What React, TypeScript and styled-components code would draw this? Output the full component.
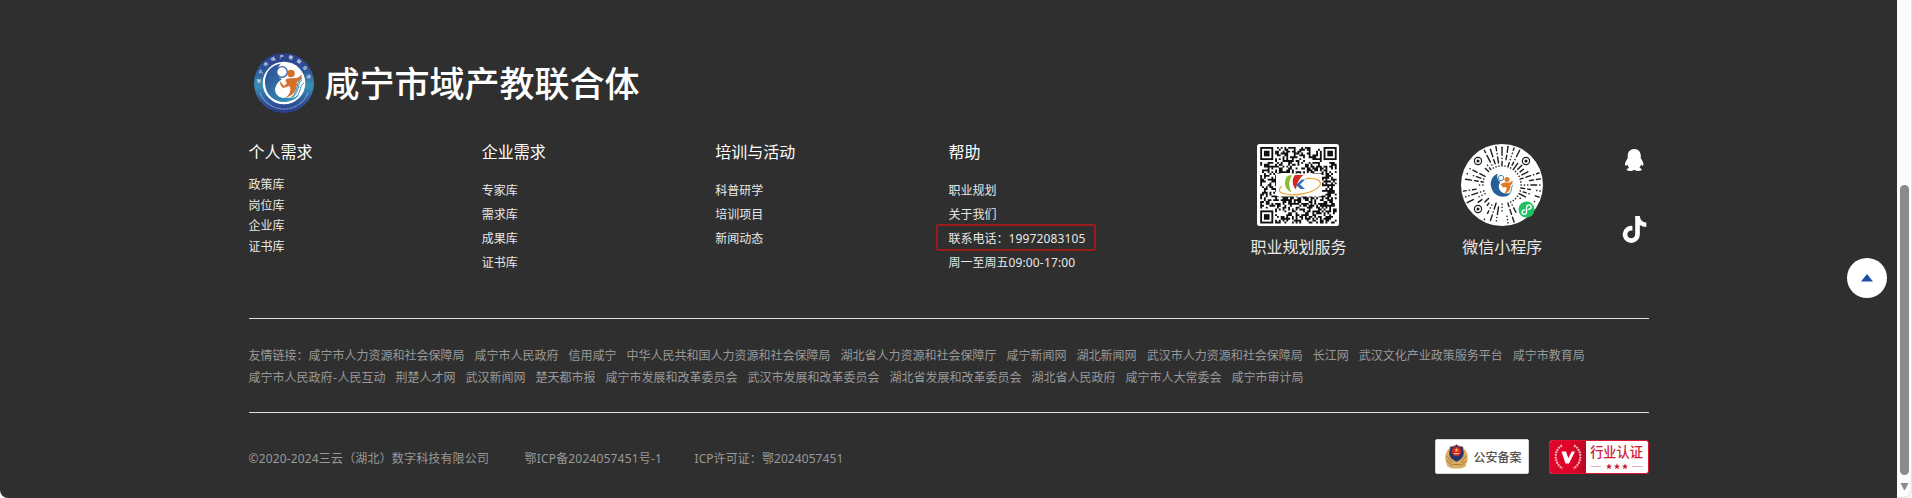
import React from 'react';
import styled, { createGlobalStyle } from 'styled-components';
import { FaTiktok } from 'react-icons/fa';

const GlobalStyle = createGlobalStyle`
  *, *::before, *::after { box-sizing: border-box; }
  body {
    margin: 0;
    background: #fafafa;
    font-family: 'Noto Sans', 'Noto Sans CJK SC', sans-serif;
    overflow: hidden;
  }
  ul { list-style: none; margin: 0; padding: 0; }
`;

const Page = styled.div`
  display: flex;
  width: 1912px;
  height: 498px;
  background: #fafafa;
`;

const Footer = styled.footer`
  position: relative;
  flex: 1;
  padding: 53px 248.5px 0;
  background: #2f2f2f;
  border-bottom-left-radius: 8px;
`;

const Brand = styled.div`
  display: flex;
  align-items: center;
  gap: 11px;
  height: 60px;
  padding-left: 5px;
`;

const BrandName = styled.h1`
  margin: -3px 0 0;
  font-family: 'Noto Sans CJK SC', sans-serif;
  font-size: 35px;
  line-height: 60px;
  font-weight: 500;
  color: #fff;
  white-space: nowrap;
`;

const Columns = styled.div`
  display: grid;
  grid-template-columns: repeat(6, 1fr);
  height: 205px;
  padding-top: 31px;
`;

const Heading = styled.h2`
  margin: -1px 0 0;
  font-size: 16px;
  line-height: 18px;
  font-weight: 400;
  color: #fff;
`;

const LinkList = styled.ul<{ $row: number; $top: number }>`
  margin-top: ${(p) => p.$top}px;
  li {
    height: ${(p) => p.$row}px;
    line-height: ${(p) => p.$row}px;
    font-size: 12px;
    color: #e8e8e8;
    white-space: nowrap;
  }
`;

const Marked = styled.span`
  position: relative;
  &::after {
    content: '';
    position: absolute;
    left: -12px;
    top: -6px;
    width: 160px;
    height: 27px;
    border: 2px solid #9a1d19;
    border-radius: 2px;
  }
`;

const Digits = styled.span`
  letter-spacing: 0.14px;
`;

const CodeCard = styled.figure`
  display: flex;
  flex-direction: column;
  align-items: center;
  margin: 0;
  svg { display: block; }
  figcaption {
    margin-top: 10px;
    font-size: 16px;
    line-height: 22px;
    color: #e8e8e8;
    white-space: nowrap;
  }
`;

const LastColumn = styled.div`
  display: flex;
  justify-content: space-between;
  padding-left: 46px;
`;

const Social = styled.div`
  display: flex;
  flex-direction: column;
  align-items: center;
  gap: 45px;
  width: 28px;
  padding-top: 5px;
  color: #fff;
`;

const Divider = styled.hr`
  margin: 0;
  border: 0;
  height: 1px;
  background: #dcdfe6;
`;

const Friends = styled.div`
  height: 93px;
  padding-top: 26px;
  font-size: 12px;
  line-height: 22px;
  color: #999;
`;

const FriendRow = styled.div`
  display: flex;
  gap: 10px;
  white-space: nowrap;
`;

const Hyphen = styled.span`
  margin: 0 0.5px;
`;

const Bottom = styled.div`
  display: flex;
  align-items: flex-start;
  padding-top: 26px;
  font-size: 12px;
  color: #999;
`;

const Legal = styled.div`
  display: flex;
  flex: 1;
  padding-top: 9px;
  line-height: 22px;
  white-space: nowrap;
`;

const LegalItem = styled.span<{ $width: number; $spacing: number }>`
  width: ${(p) => p.$width}px;
  letter-spacing: ${(p) => p.$spacing}px;
`;

const PoliceBadge = styled.div`
  display: flex;
  align-items: center;
  width: 94px;
  height: 35px;
  margin-right: 19.5px;
  padding-left: 9px;
  gap: 5.5px;
  border: 1px solid #d5d5da;
  border-radius: 2px;
  background: #fff;
  font-family: 'Noto Sans CJK SC', sans-serif;
  font-size: 12px;
  font-weight: 500;
  color: #55514e;
  white-space: nowrap;
`;

const TrustBadge = styled.div`
  display: flex;
  width: 100px;
  height: 34px;
  margin-top: 1px;
  border: 1px solid #d9152f;
  border-radius: 3px;
  overflow: hidden;
  background: #fff;
`;

const TrustMark = styled.div`
  display: flex;
  align-items: center;
  justify-content: center;
  width: 36px;
  background: linear-gradient(90deg, #e0042a 60%, #b80a20);
`;

const TrustText = styled.div`
  display: flex;
  flex: 1;
  flex-direction: column;
  align-items: center;
  font-family: 'Noto Sans CJK SC', sans-serif;
  font-size: 13.2px;
  line-height: 22px;
  font-weight: 500;
  color: #d01c33;
  white-space: nowrap;
`;

const BackTop = styled.button`
  position: absolute;
  left: 1847px;
  top: 258px;
  display: flex;
  align-items: center;
  justify-content: center;
  width: 40px;
  height: 40px;
  padding: 0;
  border: 0;
  border-radius: 50%;
  background: #fff;
`;

const Scrollbar = styled.div`
  display: flex;
  flex-direction: column;
  width: 15px;
  padding: 185px 0 0 3px;
  background: #fcfcfc;
  border-bottom-right-radius: 8px;
  box-shadow: inset -1px -1px 0 #e2e2e2;
  svg { display: block; margin-top: 8px; }
`;

const Thumb = styled.div`
  width: 9px;
  height: 290px;
  border-radius: 5px;
  background: #8b8b8b;
`;

// Small deterministic generator so the code patterns are stable between renders.
const makeRandom = (seed: number) => () => {
  seed = (seed * 1664525 + 1013904223) % 4294967296;
  return seed / 4294967296;
};

const Emblem = () => (
  <svg width="60" height="60" viewBox="0 0 60 60">
    <defs>
      <linearGradient id="ring" x1="0" y1="0" x2="0" y2="1">
        <stop offset="0" stopColor="#2b3b88" />
        <stop offset="0.3" stopColor="#2d5799" />
        <stop offset="0.55" stopColor="#3a93b4" />
        <stop offset="0.78" stopColor="#2f5b9d" />
        <stop offset="1" stopColor="#293c88" />
      </linearGradient>
      <linearGradient id="swirl" x1="0" y1="0" x2="1" y2="1">
        <stop offset="0" stopColor="#2b4a94" />
        <stop offset="1" stopColor="#3a9cb9" />
      </linearGradient>
      <path id="arcTop" d="M6.5 31 A23.6 23.6 0 1 1 53.5 31" />
    </defs>
    <circle cx="30" cy="30" r="30" fill="url(#ring)" />
    <circle cx="30" cy="30" r="21.3" fill="#fff" />
    <text fill="#e9eef8" fontSize="4.4" fontWeight="500" fontFamily="'Noto Sans CJK SC', sans-serif">
      <textPath href="#arcTop" startOffset="1" textLength="72">咸宁市域产教联合体</textPath>
    </text>
    <path d="M6 40 A26 26 0 0 0 54 40" fill="none" stroke="#cbd8ec" strokeWidth="1.1" strokeDasharray="0.9 0.5" opacity="0.7" />
    <path d="M27 10.5 C16 12 10.5 21 11 31 C12 43 21 49.5 31 49 C38 48.5 43 45 45 42 C38 47 27 45 23 39 C20 33 24 29 28 26 C24 25 22 20 23.5 16 C24.5 13 26 11.5 27 10.5Z" fill="url(#swirl)" />
    <circle cx="28" cy="19" r="5.3" fill="#fff" stroke="#2f559b" strokeWidth="1.2" />
    <path d="M21 36 C22 32 24 29 28 29 L33 34 C37 40 33 45 29 45 C24 44 21 41 21 36Z" fill="#fff" />
    <circle cx="37" cy="20.5" r="3.8" fill="#d2702c" />
    <path d="M26 28 L30 33 L33 30 C31 28 31 26 34 25.5 L42 25 C45 24.5 46 23 47.5 21.5 C48.5 25 45.5 28 43 29 C43 36 41 42 32 44.5 C37 40 37 36 35.5 33 L29 35 L26.5 32Z" fill="#d2702c" />
    <path d="M48 27 C43 29 47 36 39 44 M50 30 C45.5 32 48 38 42 44 M48 25 C41 29 46 37 37 45" fill="none" stroke="#378eb2" strokeWidth="1" />
  </svg>
);

const SIZE = 41;

const isFinder = (x: number, y: number) => {
  const near = (ox: number, oy: number) => x >= ox && x < ox + 8 && y >= oy && y < oy + 8;
  return near(0, 0) || near(SIZE - 8, 0) || near(0, SIZE - 8);
};

const qrPath = (() => {
  const rand = makeRandom(77);
  let d = '';
  for (let y = 0; y < SIZE; y++) {
    for (let x = 0; x < SIZE; x++) {
      const on = rand() < 0.52;
      const centre = x > 8 && x < 33 && y > 14 && y < 26;
      if (on && !isFinder(x, y) && !centre) d += `M${x} ${y}h1v1h-1z`;
    }
  }
  return d;
})();

const QrCode = () => (
  <svg width="82" height="82" viewBox="0 0 82 82">
    <rect width="82" height="82" rx="2.5" fill="#fff" />
    <g transform="translate(3.2 3) scale(1.865)">
      <path d={qrPath} fill="#111" />
      {[[0, 0], [34, 0], [0, 34]].map(([x, y]) => (
        <g key={`${x}-${y}`} transform={`translate(${x} ${y})`}>
          <rect x="0.5" y="0.5" width="6" height="6" fill="#fff" stroke="#111" />
          <rect x="2" y="2" width="3" height="3" fill="#111" />
        </g>
      ))}
    </g>
    <rect x="19" y="29.5" width="46" height="23" rx="2" fill="#fff" />
    <path d="M29.5 33 C31 31 34 31 35 31.5 C32 36 31 42 34.5 48.5 C27 45 27 38 29.5 33Z" fill="#8bbd2f" />
    <path d="M38 31 L46.5 31 C42 34.5 40 39 39 45.5 C34.5 41 35 34.5 38 31Z" fill="#d7281f" />
    <path d="M39 41 L45 35.5 L48 35.5 L43 40.5 L48 45 L43.5 45Z" fill="#2c6fb7" />
    <path d="M48 35 C59 33 66 37 62.5 42 C57 49 38 53 26 49.5 C21 48 21.5 45 25 42" fill="none" stroke="#e9a33a" strokeWidth="1.2" />
  </svg>
);

const RAY_COUNT = 40;

const rays = (() => {
  const rand = makeRandom(12);
  const out: { a: number; from: number; to: number }[] = [];
  for (let i = 0; i < RAY_COUNT; i++) {
    const a = (i * 360) / RAY_COUNT;
    let r = 19;
    while (r < 38.5) {
      const len = rand() < 0.5 ? 0.3 : 2 + rand() * 6;
      const to = Math.min(r + len, 39);
      const rad = (a * Math.PI) / 180;
      const x = 41 + Math.cos(rad) * ((r + to) / 2);
      const y = 41 + Math.sin(rad) * ((r + to) / 2);
      const blocked = [[17, 17], [65, 17], [17, 65], [65, 65]].some(
        ([cx, cy]) => Math.hypot(cx - x, cy - y) < (cx === 65 && cy === 65 ? 11 : 7)
      );
      if (!blocked && rand() < 0.82) out.push({ a, from: r, to });
      r = to + 3;
    }
  }
  return out;
})();

const MiniCode = () => (
  <svg width="82" height="82" viewBox="0 0 82 82">
    <circle cx="41" cy="41" r="41" fill="#fff" />
    {rays.map((ray, i) => (
      <line
        key={i}
        x1={41 + ray.from}
        x2={41 + ray.to}
        y1="41"
        y2="41"
        transform={`rotate(${ray.a} 41 41)`}
        stroke="#1c1c1c"
        strokeWidth="1.4"
        strokeLinecap="round"
      />
    ))}
    {[[17, 17], [65, 17], [17, 65]].map(([x, y]) => (
      <g key={`${x}-${y}`}>
        <circle cx={x} cy={y} r="3.6" fill="#fff" stroke="#1c1c1c" strokeWidth="1.2" />
        <circle cx={x} cy={y} r="1.5" fill="#1c1c1c" />
      </g>
    ))}
    <circle cx="65.5" cy="65.5" r="8" fill="#1fc064" />
    <path d="M64 65.8 C61.500 66 61 67 61 68 C61 69.500 62 70.300 63.200 70.300 C64.800 70.300 65.600 69 65.600 67.500 V63.700 C65.600 62 66.500 60.800 68 60.800 C69.300 60.800 70.200 61.700 70.200 63 C70.200 64.200 69.300 65.100 67.500 65.300" fill="none" stroke="#fff" strokeWidth="1.3" strokeLinecap="round" />
    <path d="M37 29.5 C31 32 29 37 30 42.5 C31.5 50 38 53.5 44 52.5 C47 52 49 50 50 48.5 C45 51 40 49 38.5 45.5 C37 42 38 40 39.5 38 C36 36 35.5 32 37 29.5Z" fill="#255f96" />
    <circle cx="40" cy="34" r="2.7" fill="#fff" stroke="#3a7ba8" strokeWidth="0.9" />
    <circle cx="46" cy="35.5" r="2.5" fill="#df7a26" />
    <path d="M39.5 40 L43.5 38.5 L49 38.5 L51.5 36.5 C52 39 51 40.5 49.5 41 C50 46 47 49 43 49.5 C46.5 46 45.5 44 45 43 L42 43.5Z" fill="#df7a26" />
    <path d="M52 41 C49.5 43 52 46 48 50" fill="none" stroke="#3a96ad" strokeWidth="1" />
  </svg>
);

const Penguin = () => (
  <svg width="18.5" height="22" viewBox="0 0 18.500 22">
    <path
      fill="currentColor"
      d="M9.250 0 C5 0 2.700 3 2.700 6.800 V9.300 C1.300 11.300 0 13.800 0 15.600 C0 17.200 0.900 17 2.400 15.400 C2.700 16.900 3.300 18.100 4.200 19 C2.500 19.400 1.700 20.100 1.700 20.800 C1.700 22.300 7.600 22.300 9.250 20.700 C10.900 22.300 16.800 22.300 16.800 20.800 C16.800 20.100 16 19.400 14.300 19 C15.200 18.100 15.800 16.900 16.100 15.400 C17.600 17 18.500 17.200 18.500 15.600 C18.500 13.800 17.200 11.300 15.800 9.300 V6.800 C15.800 3 13.500 0 9.250 0Z"
    />
  </svg>
);

const PoliceEmblem = () => (
  <svg width="23" height="25" viewBox="0 0 23 25">
    <path d="M4.5 4 C0 9 -0.5 13 1 18 L2.5 22.5 L7 24.5 H16 L20.5 22.5 L22 18 C23.5 13 23 9 18.500 4Z" fill="#d8ad66" />
    <path d="M2 12 L7 19 M1.500 16 L7 22 M21 12 L16 19 M21.500 16 L16 22 M7.500 20.500 H15.500" stroke="#a97730" strokeWidth="0.9" fill="none" />
    <path d="M11.500 0.500 C14 2.500 16 2.500 18 2.500 C17.500 5 19.500 7 19 10 C18.500 14.500 14.500 16.500 11.500 18 C8.500 16.500 4.500 14.500 4 10 C3.500 7 5.500 5 5 2.500 C7 2.500 9 2.500 11.500 0.500Z" fill="#26326f" stroke="#d4a44f" strokeWidth="0.7" />
    <circle cx="11.500" cy="7.500" r="4.700" fill="#d3262a" />
    <path d="M11.500 3.800 L12.100 5.400 L13.700 5.400 L12.400 6.400 L12.900 8 L11.500 7 L10.100 8 L10.600 6.400 L9.300 5.400 L10.900 5.400Z M8.800 9 H14.200 V10.200 H8.800Z" fill="#f0cb54" />
  </svg>
);

const Laurel = () => (
  <svg width="30" height="28" viewBox="0 0 30 28">
    <g fill="none" stroke="#f9b9c0" strokeWidth="2.1" strokeDasharray="1.9 0.8">
      <path d="M9 2.500 C0.500 7 0.500 20 9.500 25.500" />
      <path d="M21 2.500 C29.500 7 29.500 20 20.500 25.500" />
    </g>
    <path d="M8.500 8.500 H13 L15.300 15.200 L18.700 8.500 H22 L16 20.500 H12.500Z" fill="#fff" />
  </svg>
);

const Stars = () => (
  <svg width="54" height="7" viewBox="0 0 54 7">
    <path d="M1 3.500 H11 M42 3.500 H53" stroke="#e39aa3" strokeWidth="0.8" />
    {[19, 27, 35].map((x) => (
      <path
        key={x}
        transform={`translate(${x} 3.500)`}
        d="M0 -3 L0.900 -0.900 L3 -0.800 L1.300 0.600 L1.900 2.700 L0 1.500 L-1.900 2.700 L-1.300 0.600 L-3 -0.800 L-0.900 -0.900Z"
        fill="#d01c33"
      />
    ))}
  </svg>
);

const friendRows = [
  ['咸宁市人力资源和社会保障局', '咸宁市人民政府', '信用咸宁', '中华人民共和国人力资源和社会保障局', '湖北省人力资源和社会保障厅', '咸宁新闻网', '湖北新闻网', '武汉市人力资源和社会保障局', '长江网', '武汉文化产业政策服务平台', '咸宁市教育局'],
  ['荆楚人才网', '武汉新闻网', '楚天都市报', '咸宁市发展和改革委员会', '武汉市发展和改革委员会', '湖北省发展和改革委员会', '湖北省人民政府', '咸宁市人大常委会', '咸宁市审计局'],
];

const sections = [
  { title: '个人需求', row: 20.5, top: 14, items: ['政策库', '岗位库', '企业库', '证书库'] },
  { title: '企业需求', row: 24, top: 18, items: ['专家库', '需求库', '成果库', '证书库'] },
  { title: '培训与活动', row: 24, top: 18, items: ['科普研学', '培训项目', '新闻动态'] },
];

export default function App() {
  return (
    <Page>
      <GlobalStyle />
      <Footer>
        <Brand>
          <Emblem />
          <BrandName>咸宁市域产教联合体</BrandName>
        </Brand>
        <Columns>
          {sections.map((s) => (
            <div key={s.title}>
              <Heading>{s.title}</Heading>
              <LinkList $row={s.row} $top={s.top}>
                {s.items.map((item) => <li key={item}>{item}</li>)}
              </LinkList>
            </div>
          ))}
          <div>
            <Heading>帮助</Heading>
            <LinkList $row={24} $top={18}>
              <li>职业规划</li>
              <li>关于我们</li>
              <li><Marked>联系电话：<Digits>19972083105</Digits></Marked></li>
              <li>周一至周五<Digits>09:00-17:00</Digits></li>
            </LinkList>
          </div>
          <CodeCard>
            <QrCode />
            <figcaption>职业规划服务</figcaption>
          </CodeCard>
          <LastColumn>
            <CodeCard>
              <MiniCode />
              <figcaption>微信小程序</figcaption>
            </CodeCard>
            <Social>
              <Penguin />
              <FaTiktok size={27} />
            </Social>
          </LastColumn>
        </Columns>
        <Divider />
        <Friends>
          <FriendRow>
            <span>友情链接：<span>{friendRows[0][0]}</span></span>
            {friendRows[0].slice(1).map((name) => <span key={name}>{name}</span>)}
          </FriendRow>
          <FriendRow>
            <span>咸宁市人民政府<Hyphen>-</Hyphen>人民互动</span>
            {friendRows[1].map((name) => <span key={name}>{name}</span>)}
          </FriendRow>
        </Friends>
        <Divider />
        <Bottom>
          <Legal>
            <LegalItem $width={276} $spacing={0.16}>©2020-2024三云（湖北）数字科技有限公司</LegalItem>
            <LegalItem $width={170} $spacing={0.18}>鄂ICP备2024057451号-1</LegalItem>
            <LegalItem $width={160} $spacing={0.07}>ICP许可证：鄂2024057451</LegalItem>
          </Legal>
          <PoliceBadge>
            <PoliceEmblem />
            公安备案
          </PoliceBadge>
          <TrustBadge>
            <TrustMark><Laurel /></TrustMark>
            <TrustText>
              行业认证
              <Stars />
            </TrustText>
          </TrustBadge>
        </Bottom>
        <BackTop aria-label="返回顶部">
          <svg width="12" height="8" viewBox="0 0 12 8"><path d="M6 0 L12 7.500 H0Z" fill="#1a50a6" /></svg>
        </BackTop>
      </Footer>
      <Scrollbar>
        <Thumb />
        <svg width="9" height="8" viewBox="0 0 9 8"><path d="M0.500 0 H8.500 L5 7 H4Z" fill="#8b8b8b" /></svg>
      </Scrollbar>
    </Page>
  );
}
